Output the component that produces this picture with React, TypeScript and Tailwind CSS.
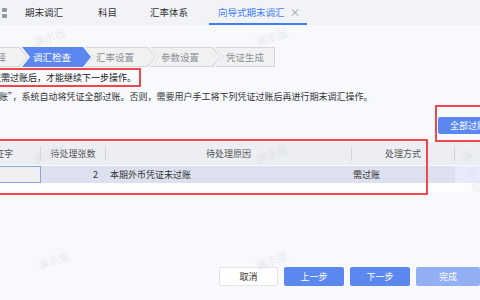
import React from "react";

const chevron =
  "[clip-path:polygon(0_0,calc(100%_-_8px)_0,100%_50%,calc(100%_-_8px)_100%,0_100%,8px_50%)]";
const chevronLast = "[clip-path:polygon(0_0,100%_0,100%_100%,0_100%,8px_50%)]";

const steps = [
  { label: "期间选择" },
  { label: "调汇检查", active: true },
  { label: "汇率设置" },
  { label: "参数设置" },
  { label: "凭证生成", last: true },
];

const marks = [
  [33, 29],
  [255, 29],
  [33, 146],
  [255, 146],
  [466, 146],
  [37, 252],
  [255, 252],
];

function Step({ label, active, last, first }: { label: string; active?: boolean; last?: boolean; first?: boolean }) {
  const clip = last ? chevronLast : chevron;
  if (active) {
    return (
      <div className={`-ml-[6px] flex h-[20px] w-[69px] shrink-0 items-center bg-[#5b87ef] pl-[11px] text-white ${clip}`}>
        {label}
      </div>
    );
  }
  return (
    <div className={`${first ? "" : "-ml-[6px]"} flex h-[20px] ${last ? "w-[60px]" : "w-[71px]"} shrink-0 bg-[#d6d7da] ${clip}`}>
      <div className={`m-px flex flex-1 items-center bg-[#f1f1f2] pl-[10px] text-[#8d8f95] ${clip}`}>{label}</div>
    </div>
  );
}

export default function App() {
  return (
    <div className="relative h-[300px] w-[480px] overflow-hidden bg-[#f8f9fd] font-['Noto_Sans_CJK_SC','Noto_Sans',sans-serif] text-[9px] text-[#333]">
      {/* tabs */}
      <div className="flex h-[25px] items-stretch bg-[#f2f3f7] text-[9.5px] text-[#333]">
        <div className="ml-[2px] flex flex-col justify-center gap-[2px]">
          <div className="h-[4px] w-[5px] rounded-[1px] bg-[#8f96a3]" />
          <div className="h-[4px] w-[5px] rounded-[1px] bg-[#8f96a3]" />
        </div>
        <div className="ml-[8px] flex items-center px-[10px]">期末调汇</div>
        <div className="ml-[15px] flex items-center px-[10px]">科目</div>
        <div className="ml-[13px] flex items-center px-[10px]">汇率体系</div>
        <div className="ml-[11px] flex items-center border-b-2 border-[#3f7ef6] pl-[9px] pr-[6px] pt-[2px] text-[#3f7ef6]">
          向导式期末调汇
          <span className="ml-[5px] text-[11px] leading-none text-[#9aa0ab]">×</span>
        </div>
      </div>

      {/* steps */}
      <div className="mt-[22px] flex -ml-[43px] text-[9.5px]">
        {steps.map((s, i) => (
          <Step key={s.label} {...s} first={i === 0} />
        ))}
      </div>

      {/* notes */}
      <div className="mt-px -ml-[14px] flex h-[19px] w-[155px] items-center border-2 border-[#f2474a] pl-[4px] text-[#222]">
        证需过账后，才能继续下一步操作。
      </div>
      <div className="-ml-[10px] h-[20px] whitespace-nowrap leading-[20px] text-[#333]">
        过账”，系统自动将凭证全部过账。否则，需要用户手工将下列凭证过账后再进行期末调汇操作。
      </div>

      {/* action */}
      <div className="-mt-[2px] ml-[435px] w-[60px] border-2 border-[#f2474a] pb-[6px] pl-px pt-[10px]">
        <div className="flex h-[17px] w-[56px] items-center rounded-[2px] bg-[#5b87ef] pl-[12px] text-white">全部过账</div>
      </div>

      {/* table */}
      <div className="relative -ml-[41px] w-[600px]">
        <div className="flex h-[23px] items-center bg-[#eceef3] text-[#555]">
          <div className="flex w-[82px] items-center">
            <span className="flex-1 text-center">凭证字</span>
            <div className="h-[14px] w-px bg-[#d2d4da]" />
          </div>
          <div className="flex w-[65px] items-center">
            <span className="flex-1 text-center">待处理张数</span>
            <div className="h-[14px] w-px bg-[#d2d4da]" />
          </div>
          <div className="flex w-[246px] items-center">
            <span className="flex-1 text-center">待处理原因</span>
            <div className="h-[14px] w-px bg-[#d2d4da]" />
          </div>
          <div className="flex w-[103px] items-center">
            <span className="flex-1 text-center">处理方式</span>
            <div className="h-[14px] w-px bg-[#d2d4da]" />
          </div>
          <div className="flex-1" />
        </div>
        <div className="mt-px flex h-[17px] items-stretch bg-[#dde0ee] text-[#333]">
          <div className="w-[82px] border border-[#86a6ea] bg-[#efeff1]" />
          <div className="flex w-[65px] items-center justify-end pr-[8px]">2</div>
          <div className="flex w-[246px] items-center pl-[4px]">本期外币凭证未过账</div>
          <div className="flex w-[103px] items-center pl-px">需过账</div>
          <div className="flex-1 bg-[#e7ebfc]" />
        </div>
        <div className="h-[10px] bg-[#fdfdfd]" />
        <div className="absolute -top-[3px] left-[39px] h-[56px] w-[430px] border-2 border-[#f2474a]" />
      </div>

      {/* footer */}
      <div className="ml-[219px] mt-[74px] flex gap-[6px]">
        <div className="flex h-[19px] w-[64px] items-center justify-center rounded-[2px] border border-[#e3e4e8] bg-white text-[#333]">取消</div>
        <div className="flex h-[19px] w-[65px] items-center justify-center rounded-[2px] bg-[#5b87ef] text-white">上一步</div>
        <div className="flex h-[19px] w-[65px] items-center justify-center rounded-[2px] bg-[#5b87ef] text-white">下一步</div>
        <div className="flex h-[19px] w-[64px] shrink-0 items-center justify-center rounded-[2px] bg-[#93aff4] text-white">完成</div>
      </div>

      {/* watermarks */}
      {marks.map(([x, y]) => (
        <div
          key={`${x}-${y}`}
          className="pointer-events-none absolute -rotate-[18deg] text-[11px] text-[#d9dbe0] opacity-50"
          style={{ left: x, top: y }}
        >
          演示版
        </div>
      ))}
    </div>
  );
}
